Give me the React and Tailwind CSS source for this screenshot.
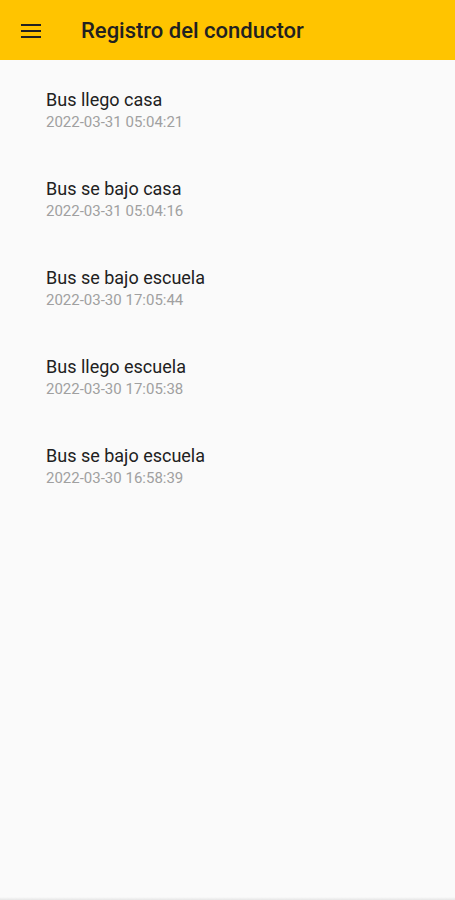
const entries = [
  { title: 'Bus llego casa', date: '2022-03-31 05:04:21' },
  { title: 'Bus se bajo casa', date: '2022-03-31 05:04:16' },
  { title: 'Bus se bajo escuela', date: '2022-03-30 17:05:44' },
  { title: 'Bus llego escuela', date: '2022-03-30 17:05:38' },
  { title: 'Bus se bajo escuela', date: '2022-03-30 16:58:39' },
]

function App() {
  return (
    <div className="h-[900px] flex flex-col bg-[#fafafa]" style={{ fontFamily: 'Roboto, "Liberation Sans", sans-serif' }}>
      <header className="h-[60px] shrink-0 bg-[#ffc400] flex items-center pt-[2px]">
        <button className="w-[62px] h-full flex items-center pl-[21px]">
          <svg width="20" height="14" viewBox="0 0 20 14">
            <rect x="0" y="0" width="20" height="2" fill="#212121" />
            <rect x="0" y="6" width="20" height="2" fill="#212121" />
            <rect x="0" y="12" width="20" height="2" fill="#212121" />
          </svg>
        </button>
        <h1 className="ml-[19px] text-[22px] font-medium text-[#212121] leading-none">Registro del conductor</h1>
      </header>
      <ul className="flex-1 pt-[28px]">
        {entries.map((e, idx) => (
          <li key={idx} className="pl-[46px] h-[89px]">
            <div className="text-[18px] leading-[24px] text-[#212121]">{e.title}</div>
            <div className="text-[15px] leading-[20px] font-normal text-[#a0a0a0]">{e.date}</div>
          </li>
        ))}
      </ul>
      <div className="h-[3px] shrink-0 bg-gradient-to-b from-[#fafafa] to-[#e6e6e6]" />
    </div>
  )
}

export default App
